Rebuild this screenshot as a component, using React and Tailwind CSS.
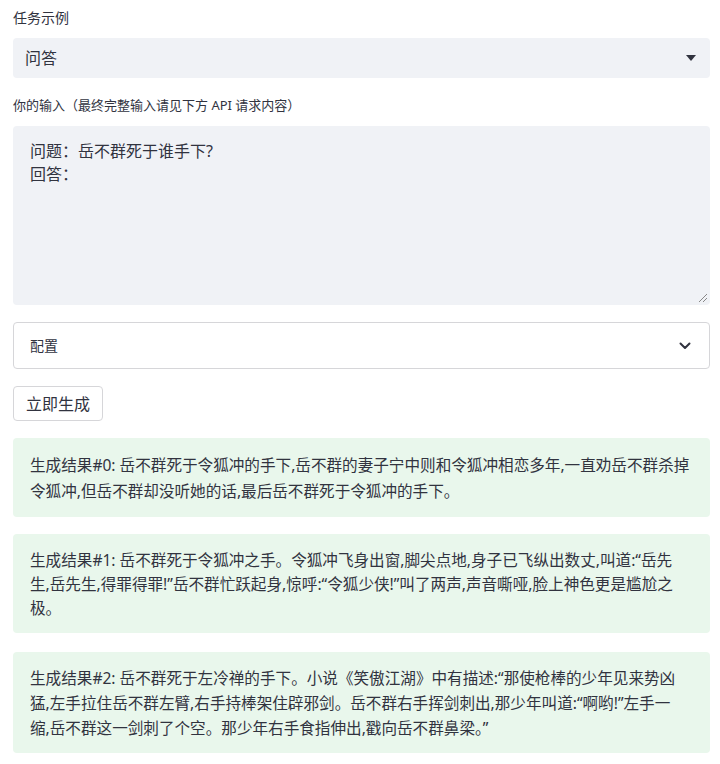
export default function App() {
  const font = { fontFamily: '"Noto Sans", "Noto Sans CJK SC", sans-serif' };
  return (
    <div className="w-[720px] h-[764px] bg-white overflow-hidden text-[#31333f]" style={font}>
      <div className="pl-[13px] pr-[10px] pt-[8px]">
        <div className="text-[14px] leading-[20px] h-[20px]">任务示例</div>
        <div className="mt-[10px] h-[40px] bg-[#f0f2f6] rounded-[4px] flex items-center justify-between pl-[12px] pr-[14px]">
          <span className="text-[16px]">问答</span>
          <svg width="10" height="6" viewBox="0 0 10 6"><path d="M0 0h10L5 6z" fill="#31333f" /></svg>
        </div>
        <div className="mt-[17px] text-[13px] leading-[20px] h-[20px]">你的输入（最终完整输入请见下方 API 请求内容）</div>
        <div className="mt-[11px] h-[179px] bg-[#f0f2f6] rounded-[4px] relative pl-[17px] pt-[14px] text-[16px] leading-[23px]">
          <div>问题：岳不群死于谁手下?</div>
          <div>回答：</div>
          <svg className="absolute right-[2px] bottom-[2px]" width="10" height="10" viewBox="0 0 10 10">
            <path d="M9 1L1 9M9 5L5 9" stroke="#888" strokeWidth="1" />
          </svg>
        </div>
        <div className="mt-[17px] h-[47px] border border-[#d6d6d9] rounded-[4px] flex items-center justify-between pl-[16px] pr-[18px]">
          <span className="text-[14px]">配置</span>
          <svg width="12" height="8" viewBox="0 0 12 8"><path d="M1.5 1.5L6 6l4.5-4.5" stroke="#31333f" strokeWidth="2" fill="none" strokeLinecap="round" strokeLinejoin="round" /></svg>
        </div>
        <div className="mt-[17px] flex">
          <div className="h-[35px] px-[12px] border border-[#d6d6d9] rounded-[4px] flex items-center text-[16px]">立即生成</div>
        </div>
        <div className="mt-[17px] bg-[#e9f7ec] rounded-[4px] pl-[17px] pt-[14px] text-[15.6px] leading-[26px] h-[79px] whitespace-nowrap">
          生成结果#0: 岳不群死于令狐冲的手下,岳不群的妻子宁中则和令狐冲相恋多年,一直劝岳不群杀掉<br />
          令狐冲,但岳不群却没听她的话,最后岳不群死于令狐冲的手下。
        </div>
        <div className="mt-[17px] bg-[#e9f7ec] rounded-[4px] pl-[17px] pt-[14px] text-[15.6px] leading-[24px] h-[99px] whitespace-nowrap">
          生成结果#1: 岳不群死于令狐冲之手。令狐冲飞身出窗,脚尖点地,身子已飞纵出数丈,叫道:“岳先<br />
          生,岳先生,得罪得罪!”岳不群忙跃起身,惊呼:“令狐少侠!”叫了两声,声音嘶哑,脸上神色更是尴尬之<br />
          极。
        </div>
        <div className="mt-[19px] bg-[#e9f7ec] rounded-[4px] pl-[17px] pt-[14px] text-[15.6px] leading-[25px] h-[101px] whitespace-nowrap">
          生成结果#2: 岳不群死于左冷禅的手下。小说《笑傲江湖》中有描述:“那使枪棒的少年见来势凶<br />
          猛,左手拉住岳不群左臂,右手持棒架住辟邪剑。岳不群右手挥剑刺出,那少年叫道:“啊哟!”左手一<br />
          缩,岳不群这一剑刺了个空。那少年右手食指伸出,戳向岳不群鼻梁。”
        </div>
      </div>
    </div>
  );
}
